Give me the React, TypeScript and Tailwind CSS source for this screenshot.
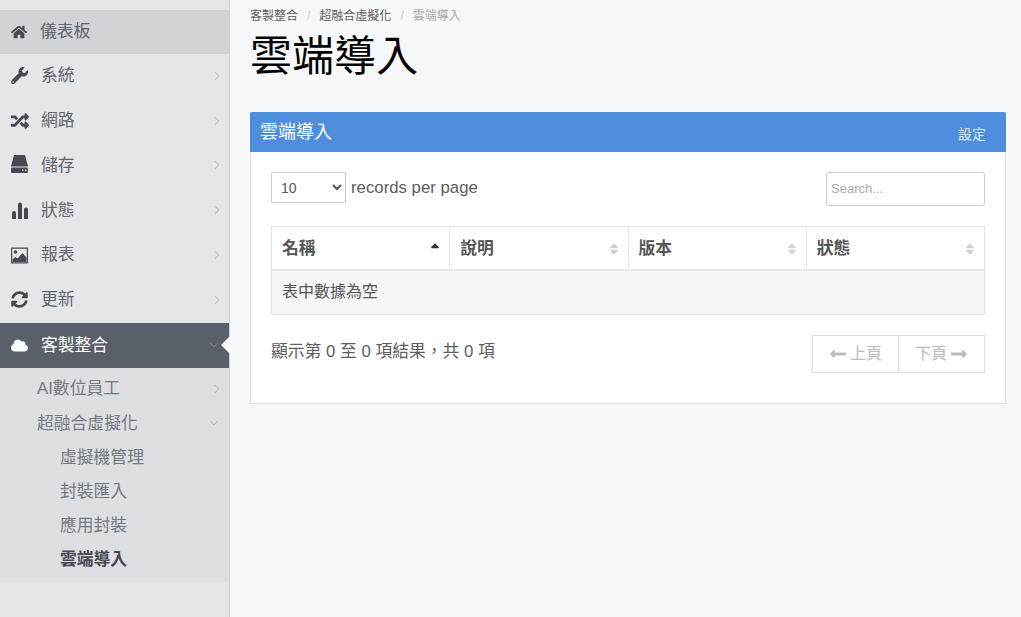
import { FaHome, FaWrench, FaRandom, FaCloud, FaSyncAlt, FaLongArrowAltLeft, FaLongArrowAltRight, FaSortUp, FaSort } from 'react-icons/fa'
import { ChevronRight, ChevronDown } from 'lucide-react'
import type { ReactNode } from 'react'

const font = "font-['Liberation_Sans','Noto_Sans_CJK_TC',sans-serif]"

function HddIcon() {
  return (
    <svg viewBox="0 0 17 18" className="-mt-[2px] h-[18px] w-[17px]" fill="currentColor">
      <path d="M3 0h11l3 11.500H0z" />
      <rect x="0" y="12.500" width="17" height="5.500" rx="1" />
      <rect x="11" y="14.500" width="1.500" height="1.500" fill="#e5e6e8" />
      <rect x="14" y="14.500" width="1.500" height="1.500" fill="#e5e6e8" />
    </svg>
  )
}

function BarsIcon() {
  return (
    <svg viewBox="0 0 17 17" className="h-[17px] w-[17px]" fill="currentColor">
      <path d="M1 11a1.500 1.500 0 0 1 4 0v6H1z" />
      <path d="M7 2.500a2 2 0 0 1 4 0V17H7z" />
      <path d="M13 7a2 1.500 0 0 1 4 0v10h-4z" />
    </svg>
  )
}

function PictureIcon() {
  return (
    <svg viewBox="0 0 17 17" className="h-[17px] w-[17px]" fill="currentColor">
      <path fillRule="evenodd" d="M0 0.500h17v16H0zm1.200 1.200v13.600h14.600V1.700z" />
      <circle cx="4.500" cy="5" r="1.800" />
      <path d="M1.500 15v-2.500l3-2.500 2 1.500 5-5.500 4 4.500V15z" />
    </svg>
  )
}

const items: { label: string; icon: ReactNode }[] = [
  { label: '系統', icon: <FaWrench size={17} /> },
  { label: '網路', icon: <FaRandom size={18} /> },
  { label: '儲存', icon: <HddIcon /> },
  { label: '狀態', icon: <BarsIcon /> },
  { label: '報表', icon: <PictureIcon /> },
  { label: '更新', icon: <FaSyncAlt size={17} /> },
]

function Sidebar() {
  return (
    <aside className="flex w-[230px] shrink-0 flex-col border-r border-[#cfd2d6] bg-[#e5e6e8] pt-[10px] text-[16.800px] text-[#5f666f]">
      <div className="flex h-[44px] items-center bg-[#d1d3d6] pl-[11px]">
        <span className="flex w-[29px] text-[#454a52]"><FaHome size={16} /></span>
        <span>儀表板</span>
      </div>
      {items.map((item) => (
        <div key={item.label} className="flex h-[44.800px] items-center pb-[1px] pl-[11px] pr-[5px]">
          <span className="flex w-[30px] text-[#454a52]">{item.icon}</span>
          <span className="flex-1">{item.label}</span>
          <ChevronRight size={14} strokeWidth={1.500} className="text-[#a6a9ad]" />
        </div>
      ))}
      <div className="relative flex h-[44.800px] items-center bg-[#596069] pl-[11px] pr-[8px] text-white">
        <span className="flex w-[30px]"><FaCloud size={17} /></span>
        <span className="flex-1">客製整合</span>
        <ChevronDown size={14} strokeWidth={1.500} className="text-[#8b9097]" />
        <span className="absolute right-[-1px] top-[13px] h-0 w-0 border-y-[9px] border-r-[9px] border-y-transparent border-r-[#f7f8fa]" />
      </div>
      <div className="flex h-[214px] flex-col bg-[#dddfe2] pt-[4.300px] text-[#747a81]">
        <div className="flex h-[34.200px] items-center pl-[37px] pr-[5px]">
          <span className="flex-1">AI數位員工</span>
          <ChevronRight size={14} strokeWidth={1.500} className="text-[#a6a9ad]" />
        </div>
        <div className="flex h-[34.200px] items-center pl-[37px] pr-[8px]">
          <span className="flex-1">超融合虛擬化</span>
          <ChevronDown size={14} strokeWidth={1.500} className="text-[#a6a9ad]" />
        </div>
        <div className="flex h-[34.200px] items-center pl-[60px]">虛擬機管理</div>
        <div className="flex h-[34.200px] items-center pl-[60px]">封裝匯入</div>
        <div className="flex h-[34.200px] items-center pl-[60px]">應用封裝</div>
        <div className="flex h-[34.200px] items-center pl-[60px] font-bold text-[#454a52]">雲端導入</div>
      </div>
    </aside>
  )
}

function SortIcon({ active }: { active?: boolean }) {
  if (active) return <FaSortUp size={14} className="-mr-[3px] text-[#333]" />
  return <FaSort size={14} className="-mr-[3px] text-[#d0d2d4]" />
}

function Panel() {
  const cols = ['名稱', '說明', '版本', '狀態']
  return (
    <section className="border-x border-b border-[#dedfe1] bg-white">
      <div className="-mx-px flex h-[40px] items-center justify-between rounded-t-[2px] bg-[#4f8edc] px-[10px] text-white">
        <span className="pt-[1px] text-[18px]">雲端導入</span>
        <span className="pr-[10px] pt-[5px] text-[14px] text-[#dbe8f8]">設定</span>
      </div>
      <div className="px-[20px] pb-[30px] pt-[20px]">
        <div className="flex items-start justify-between">
          <div className="flex items-center gap-[5px] text-[16.800px] text-[#5c5c5c]">
            <select className="h-[31px] w-[75px] rounded-[1px] border border-[#ccc] bg-white pl-[5px] text-[14px] text-[#555]">
              <option>10</option>
            </select>
            <span>records per page</span>
          </div>
          <input
            placeholder="Search..."
            className="h-[34px] w-[159px] rounded-[3px] border border-[#ccc] px-[4px] pb-[2px] text-[13px] outline-none placeholder:text-[#aaa]"
          />
        </div>
        <table className="mt-[20px] w-full table-fixed border-collapse text-[16.800px] text-[#555]">
          <thead>
            <tr className="h-[43.500px]">
              {cols.map((col, i) => (
                <th key={col} className="border border-b-2 border-[#e5e6e8] px-[10px] pt-[1px] text-left font-bold">
                  <span className="flex items-center justify-between">
                    {col}
                    <SortIcon active={i === 0} />
                  </span>
                </th>
              ))}
            </tr>
          </thead>
          <tbody>
            <tr className="h-[44.500px] bg-[#f6f7f9]">
              <td colSpan={4} className="border border-[#e5e6e8] px-[10px] pb-[2px] text-[16px]">表中數據為空</td>
            </tr>
          </tbody>
        </table>
        <div className="mt-[20px] flex items-start justify-between text-[16.800px] text-[#5c5c5c]">
          <span className="pt-[4px]">顯示第 0 至 0 項結果，共 0 項</span>
          <div className="flex h-[38px] border border-[#ddd] pb-[1px] text-[16px] text-[#bbb]">
            <span className="flex w-[86px] items-center justify-center gap-[3px] border-r border-[#ddd]">
              <FaLongArrowAltLeft size={18} />上頁
            </span>
            <span className="flex w-[85px] items-center justify-center gap-[3px]">
              下頁<FaLongArrowAltRight size={18} />
            </span>
          </div>
        </div>
      </div>
    </section>
  )
}

export default function App() {
  return (
    <div className={`flex h-[617px] w-[1021px] overflow-hidden bg-[#f7f8fa] ${font}`}>
      <Sidebar />
      <main className="flex-1 pl-[20px] pr-[15px]">
        <nav className="flex h-[31px] items-center gap-[9px] text-[12px] text-[#5c5c5c]">
          <span>客製整合</span>
          <span className="text-[#ccc]">/</span>
          <span>超融合虛擬化</span>
          <span className="text-[#ccc]">/</span>
          <span className="text-[#aaa]">雲端導入</span>
        </nav>
        <h1 className="mb-[30px] h-[51px] text-[42px] leading-[51px] text-black">雲端導入</h1>
        <Panel />
      </main>
    </div>
  )
}
